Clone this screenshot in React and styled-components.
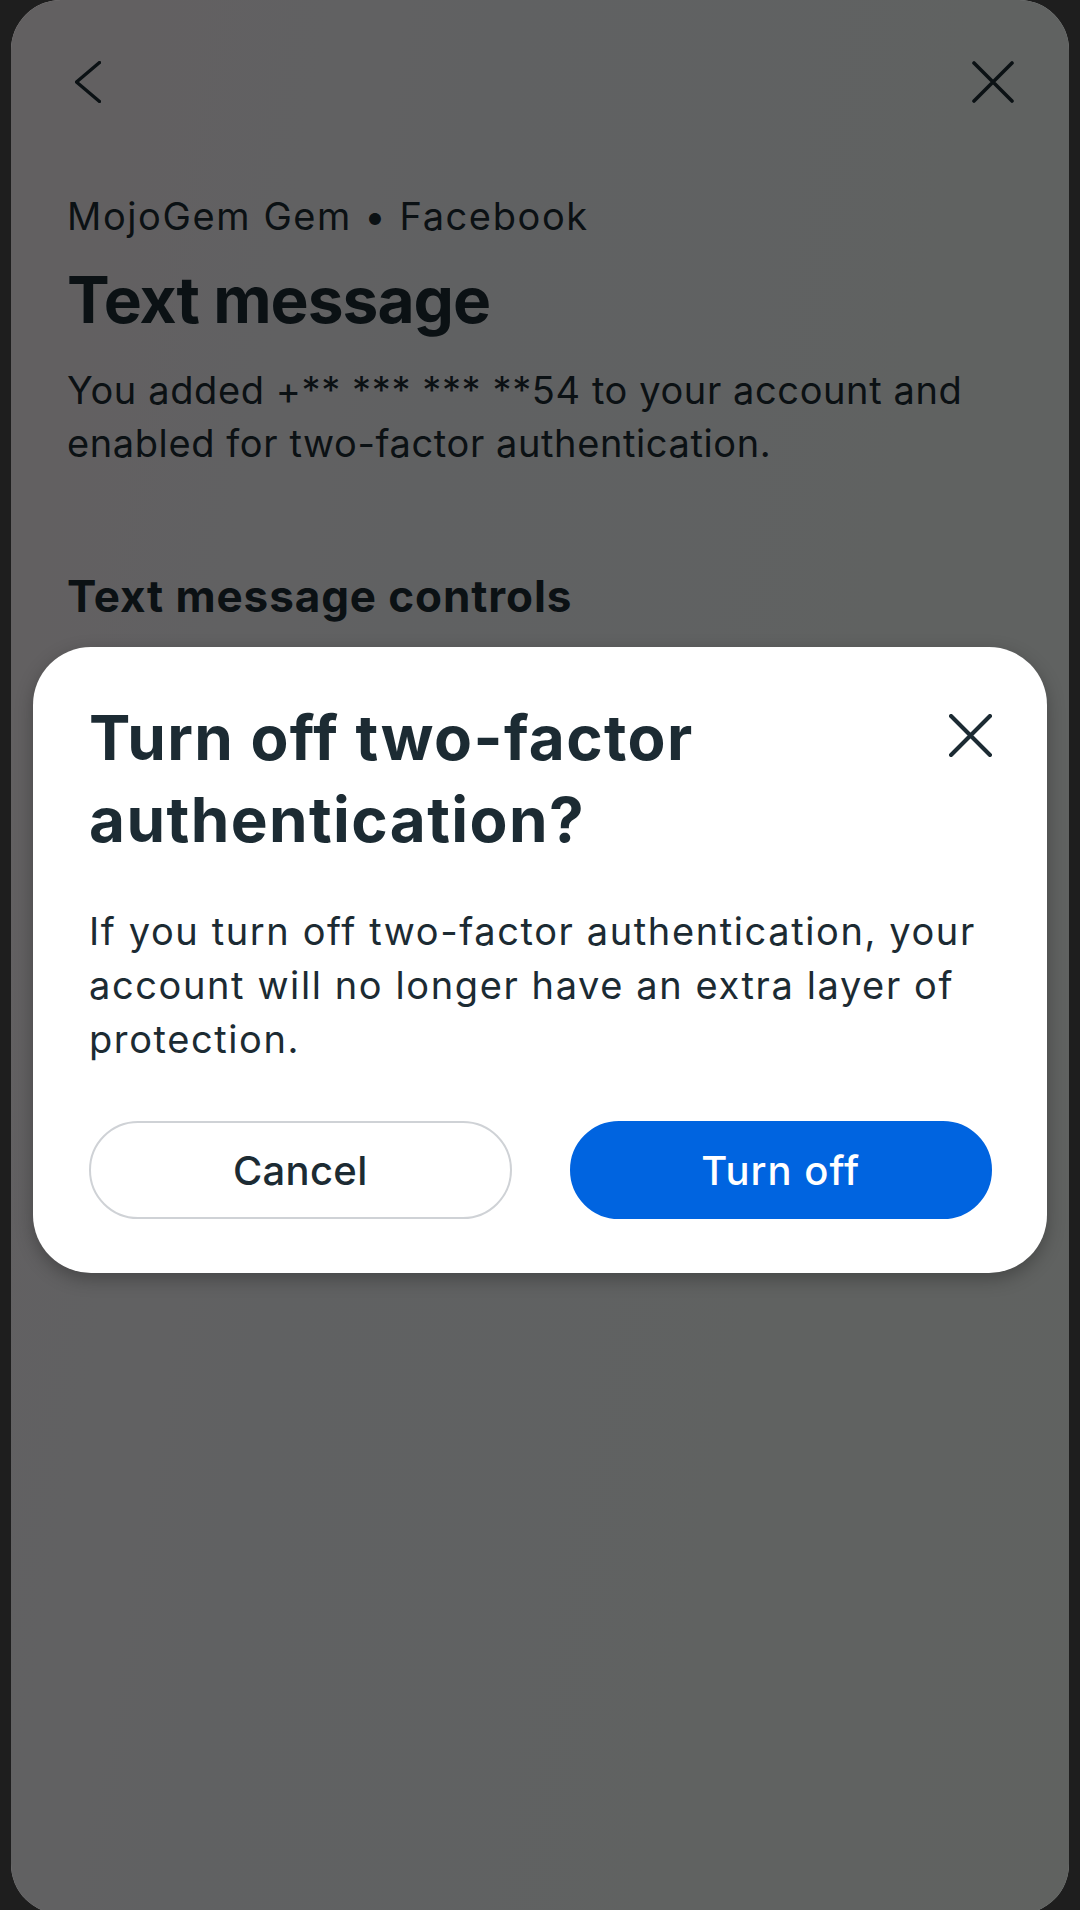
import React from "react";
import styled, { createGlobalStyle } from "styled-components";

const GlobalStyle = createGlobalStyle`
  html, body {
    margin: 0;
    padding: 0;
    background: #1e1e1e;
  }
  body {
    font-family: Inter, "Noto Sans", "Liberation Sans", sans-serif;
    -webkit-font-smoothing: antialiased;
  }
  * { box-sizing: border-box; }
`;

const Frame = styled.div`
  padding: 0 11px;
  height: 1910px;
  overflow: hidden;
`;

const Panel = styled.div`
  position: relative;
  height: 1914px;
  border-radius: 50px;
  overflow: hidden;
  background: linear-gradient(100deg, #f6f0f2 0%, #f1f3f6 35%, #eff4f3 70%, #eff5f1 100%);
  color: #1c2b33;
`;

const Page = styled.div`
  padding: 61px 56px 0;
  display: flex;
  flex-direction: column;
`;

const TopBar = styled.div`
  display: flex;
  align-items: center;
  justify-content: space-between;
  height: 42px;
`;

const IconButton = styled.button`
  display: flex;
  align-items: center;
  justify-content: center;
  padding: 0;
  margin: ${(p) => p.$mt || 0}px ${(p) => p.$mr || 0}px 0 ${(p) => p.$ml || 0}px;
  border: 0;
  background: transparent;
  color: #1c2b33;
  cursor: pointer;
`;

const Subtitle = styled.div`
  margin-top: 89px;
  font-size: 38px;
  line-height: 48px;
  font-weight: 400;
  letter-spacing: 1.6px;
`;

const Title = styled.h1`
  margin: 22px 0 0;
  font-size: 64px;
  line-height: 76px;
  font-weight: 700;
  letter-spacing: -1px;
`;

const Body = styled.p`
  margin: 26px 0 0;
  font-size: 38px;
  line-height: 53px;
  font-weight: 400;
  letter-spacing: 0.6px;
`;

const SectionTitle = styled.h2`
  margin: 99px 0 0;
  font-size: 44px;
  line-height: 54px;
  font-weight: 700;
  letter-spacing: 0.9px;
`;

const Scrim = styled.div`
  position: absolute;
  inset: 0;
  background: rgba(0, 0, 0, 0.6);
  display: flex;
  align-items: center;
  justify-content: center;
  padding: 6px 22px 0;
`;

const Dialog = styled.div`
  width: 100%;
  background: #ffffff;
  border-radius: 58px;
  padding: 50px 55px 54px 56px;
  box-shadow: 0 6px 18px rgba(0, 0, 0, 0.28);
  color: #1c2b33;
`;

const DialogHead = styled.div`
  display: flex;
  align-items: flex-start;
  justify-content: space-between;
  gap: 40px;
`;

const DialogTitle = styled.h2`
  margin: 0;
  font-size: 62px;
  line-height: 82px;
  font-weight: 700;
  letter-spacing: 1.4px;
`;

const DialogText = styled.p`
  margin: 43px 0 0;
  font-size: 38px;
  line-height: 54px;
  font-weight: 400;
  letter-spacing: 1.6px;
`;

const Actions = styled.div`
  margin-top: 55px;
  display: grid;
  grid-template-columns: 1fr 1fr;
  gap: 58px;
`;

const Button = styled.button`
  height: 98px;
  border-radius: 49px;
  font-family: inherit;
  font-size: 40px;
  font-weight: 500;
  letter-spacing: ${(p) => (p.$primary ? "1px" : "0.3px")};
  cursor: pointer;
  border: 2px solid ${(p) => (p.$primary ? "#0064e0" : "#cfd2d6")};
  background: ${(p) => (p.$primary ? "#0064e0" : "#ffffff")};
  color: ${(p) => (p.$primary ? "#ffffff" : "#1c2b33")};
`;

const Chevron = () => (
  <svg width="26" height="42" viewBox="0 0 26 42" fill="none">
    <path
      d="M24.5 1.5 L1.5 21 L24.5 40.5"
      stroke="currentColor"
      strokeWidth="3.4"
      strokeLinecap="round"
      strokeLinejoin="round"
    />
  </svg>
);

const Cross = ({ size = 42, weight = 3.6 }) => (
  <svg width={size} height={size} viewBox="0 0 42 42" fill="none">
    <path
      d="M2 2 L40 40 M40 2 L2 40"
      stroke="currentColor"
      strokeWidth={weight}
      strokeLinecap="round"
    />
  </svg>
);

export default function App() {
  return (
    <>
      <GlobalStyle />
      <Frame>
        <Panel>
          <Page>
            <TopBar>
              <IconButton $ml={8} aria-label="Back">
                <Chevron />
              </IconButton>
              <IconButton $mr={-1} aria-label="Close">
                <Cross />
              </IconButton>
            </TopBar>
            <Subtitle>MojoGem Gem • Facebook</Subtitle>
            <Title>Text message</Title>
            <Body>
              You added +** *** *** **54 to your account and enabled for
              two-factor authentication.
            </Body>
            <SectionTitle>Text message controls</SectionTitle>
          </Page>
          <Scrim>
            <Dialog role="dialog">
              <DialogHead>
                <DialogTitle>Turn off two-factor authentication?</DialogTitle>
                <IconButton $mt={17} aria-label="Close dialog">
                  <Cross size={43} weight={4} />
                </IconButton>
              </DialogHead>
              <DialogText>
                If you turn off two-factor authentication, your account will no
                longer have an extra layer of protection.
              </DialogText>
              <Actions>
                <Button>Cancel</Button>
                <Button $primary>Turn off</Button>
              </Actions>
            </Dialog>
          </Scrim>
        </Panel>
      </Frame>
    </>
  );
}
